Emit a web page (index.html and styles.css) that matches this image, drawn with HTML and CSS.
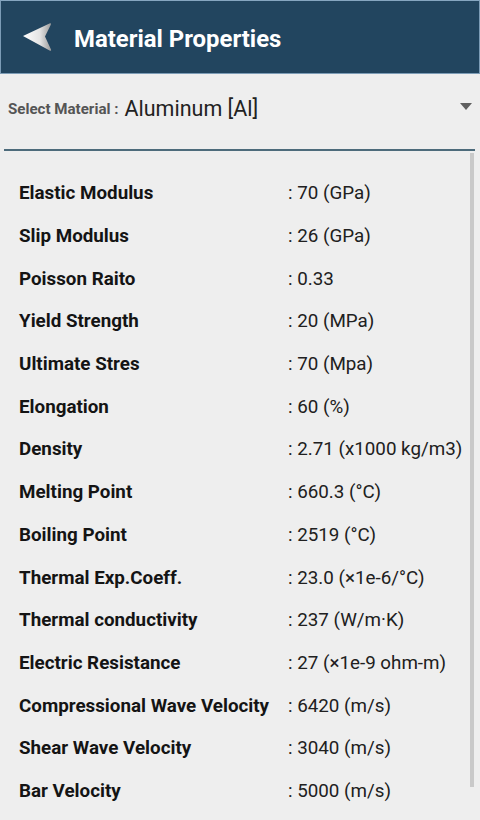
FILE: index.html
```html
<!DOCTYPE html>
<html>
<head>
<meta charset="utf-8">
<link rel="stylesheet" href="styles.css">
</head>
<body>
<header class="appbar">
  <svg class="back" width="34" height="32" viewBox="0 0 34 32">
    <defs>
      <linearGradient id="g" x1="0" y1="0" x2="1" y2="0">
        <stop offset="0" stop-color="#ffffff"/>
        <stop offset="0.6" stop-color="#e4e4e4"/>
        <stop offset="1" stop-color="#9a9a9a"/>
      </linearGradient>
    </defs>
    <path d="M2 15 L28.5 2.5 Q30.5 1.8 29.8 3.8 L24 15.5 L30 28.5 Q30.6 30.4 28.6 29.6 Z" fill="url(#g)"/>
  </svg>
  <h1 class="title">Material Properties</h1>
</header>
<section class="selector">
  <span class="sel-label">Select Material :</span>
  <span class="sel-value">Aluminum [Al]</span>
  <span class="caret"></span>
</section>
<main class="content">
  <div class="list">
    <div class="row"><span class="k">Elastic Modulus</span><span class="v">: 70 (GPa)</span></div>
    <div class="row"><span class="k">Slip Modulus</span><span class="v">: 26 (GPa)</span></div>
    <div class="row"><span class="k">Poisson Raito</span><span class="v">: 0.33</span></div>
    <div class="row"><span class="k">Yield Strength</span><span class="v">: 20 (MPa)</span></div>
    <div class="row"><span class="k">Ultimate Stres</span><span class="v">: 70 (Mpa)</span></div>
    <div class="row"><span class="k">Elongation</span><span class="v">: 60 (%)</span></div>
    <div class="row"><span class="k">Density</span><span class="v">: 2.71 (x1000 kg/m3)</span></div>
    <div class="row"><span class="k">Melting Point</span><span class="v">: 660.3 (°C)</span></div>
    <div class="row"><span class="k">Boiling Point</span><span class="v">: 2519 (°C)</span></div>
    <div class="row"><span class="k">Thermal Exp.Coeff.</span><span class="v">: 23.0 (×1e-6/°C)</span></div>
    <div class="row"><span class="k">Thermal conductivity</span><span class="v">: 237 (W/m·K)</span></div>
    <div class="row"><span class="k">Electric Resistance</span><span class="v">: 27 (×1e-9 ohm-m)</span></div>
    <div class="row"><span class="k">Compressional Wave Velocity</span><span class="v">: 6420 (m/s)</span></div>
    <div class="row"><span class="k">Shear Wave Velocity</span><span class="v">: 3040 (m/s)</span></div>
    <div class="row"><span class="k">Bar Velocity</span><span class="v">: 5000 (m/s)</span></div>
  </div>
  <div class="scrollbar"></div>
</main>
</body>
</html>
```
FILE: styles.css
```css
* { box-sizing: border-box; }
html, body { margin: 0; padding: 0; }
body {
  width: 480px;
  height: 820px;
  overflow: hidden;
  background: #eeeeee;
  font-family: Roboto, "Liberation Sans", sans-serif;
  color: #1a1a1a;
}
.appbar {
  height: 74px;
  background: #22455f;
  border: 1px solid #7c9cb6;
  border-top-color: #86a6c0;
  display: flex;
  align-items: center;
  padding-left: 20px;
}
.back { display: block; margin-top: 0px; }
.title {
  margin: 0 0 0 19px;
  font-size: 23.9px;
  font-weight: 700;
  color: #ffffff;
  padding-top: 3px;
}
.selector {
  height: 77px;
  margin: 0 5px 0 4px;
  border-bottom: 2px solid #4d6b7b;
  display: flex;
  align-items: center;
  padding: 0 3px 6px 4px;
}
.sel-label {
  font-size: 15.1px;
  font-weight: 700;
  color: #555555;
}
.sel-value {
  margin-left: 6px;
  font-size: 21.5px;
  color: #222222;
}
.caret {
  margin-left: auto;
  width: 0;
  height: 0;
  border-left: 6px solid transparent;
  border-right: 6px solid transparent;
  border-top: 7px solid #5f5f5f;
  margin-top: -4px;
}
.content {
  display: flex;
  padding-top: 2px;
}
.list {
  flex: 1;
  padding: 19px 0 0 19px;
}
.row {
  height: 42.7px;
  display: flex;
  align-items: center;
  font-size: 18.8px;
}
.k {
  width: 269px;
  font-weight: 700;
  color: #141414;
}
.v {
  color: #202020;
}
.scrollbar {
  width: 4px;
  height: 634px;
  background: #c9c9c9;
  margin-right: 6px;
}
```
